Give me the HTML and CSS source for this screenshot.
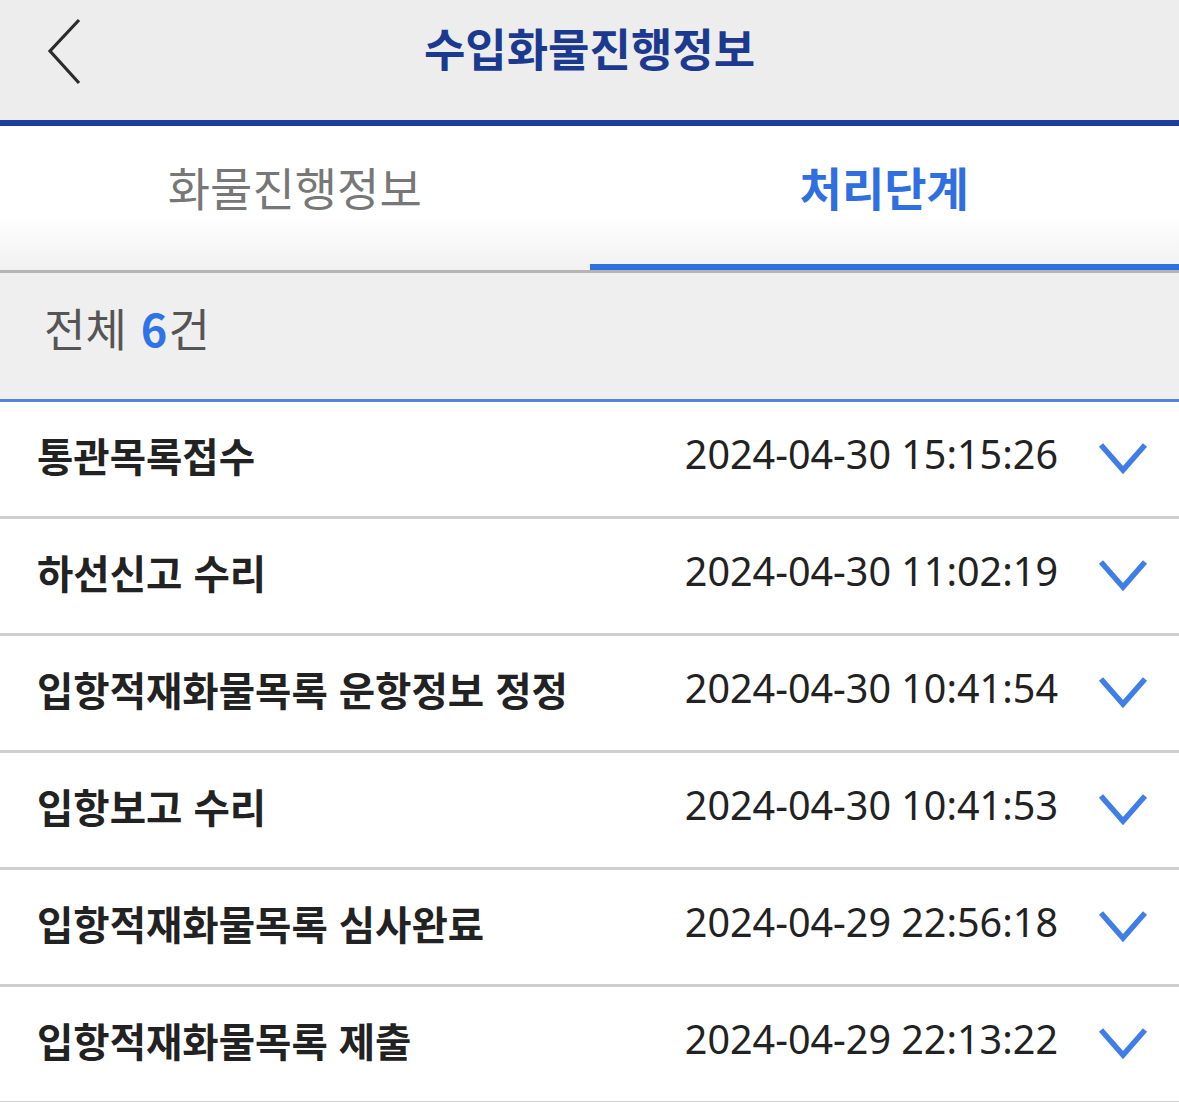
FILE: index.html
```html
<!DOCTYPE html>
<html lang="ko">
<head>
  <meta charset="UTF-8" />
  <meta name="viewport" content="width=device-width, initial-scale=1.0"/>
  <title>수입화물진행정보</title>
  <link rel="stylesheet" href="styles.css">
</head>
<body>

<header>
  <button class="btn-back" aria-label="뒤로">
    <svg width="40" height="72" viewBox="0 0 40 72"><polyline points="35,7 6,38 35,70" fill="none" stroke="#2b2b2b" stroke-width="3.2"/></svg>
  </button>
  <h1>수입화물진행정보</h1>
  <div></div>
</header>

<div class="tabs">
  <div class="tab">화물진행정보</div>
  <div class="tab active">처리단계</div>
</div>

<div class="total">전체 <strong>6</strong>건</div>

<div class="lista">
  <div class="item"><span class="nombre">통관목록접수</span><span class="fecha">2024-04-30 15:15:26</span><svg class="flecha" width="50" height="34" viewBox="0 0 50 34"><polyline points="3,4 25,29 47,4" fill="none" stroke="#3f7ee6" stroke-width="5.5"/></svg></div>
  <div class="item"><span class="nombre">하선신고 수리</span><span class="fecha">2024-04-30 11:02:19</span><svg class="flecha" width="50" height="34" viewBox="0 0 50 34"><polyline points="3,4 25,29 47,4" fill="none" stroke="#3f7ee6" stroke-width="5.5"/></svg></div>
  <div class="item"><span class="nombre">입항적재화물목록 운항정보 정정</span><span class="fecha">2024-04-30 10:41:54</span><svg class="flecha" width="50" height="34" viewBox="0 0 50 34"><polyline points="3,4 25,29 47,4" fill="none" stroke="#3f7ee6" stroke-width="5.5"/></svg></div>
  <div class="item"><span class="nombre">입항보고 수리</span><span class="fecha">2024-04-30 10:41:53</span><svg class="flecha" width="50" height="34" viewBox="0 0 50 34"><polyline points="3,4 25,29 47,4" fill="none" stroke="#3f7ee6" stroke-width="5.5"/></svg></div>
  <div class="item"><span class="nombre">입항적재화물목록 심사완료</span><span class="fecha">2024-04-29 22:56:18</span><svg class="flecha" width="50" height="34" viewBox="0 0 50 34"><polyline points="3,4 25,29 47,4" fill="none" stroke="#3f7ee6" stroke-width="5.5"/></svg></div>
  <div class="item"><span class="nombre">입항적재화물목록 제출</span><span class="fecha">2024-04-29 22:13:22</span><svg class="flecha" width="50" height="34" viewBox="0 0 50 34"><polyline points="3,4 25,29 47,4" fill="none" stroke="#3f7ee6" stroke-width="5.5"/></svg></div>
</div>

</body>
</html>
```

FILE: styles.css
```css
body {
  font-family: "Noto Sans CJK KR", "Noto Sans", sans-serif;
  margin: 0;
  background-color: white;
  color: #222;
}
header {
  background-color: #ededed;
  border-bottom: 6px solid #1c3f9f;
  display: grid;
  grid-template-columns: 1fr auto 1fr;
  align-items: center;
  padding-bottom: 26px;
  height: 94px;
}
.btn-back {
  background: none;
  border: none;
  padding: 0;
  margin-left: 44px;
  margin-top: 4px;
  width: 40px;
  height: 72px;
  cursor: pointer;
  justify-self: start;
}
header h1 {
  margin: 0;
  font-size: 45px;
  font-weight: bold;
  color: #1b3a8f;
  line-height: 1;
}
.tabs {
  display: flex;
  border-bottom: 3px solid #b4b4b4;
  background: linear-gradient(to bottom, #fff 0%, #fff 62%, #f1f1f1 100%);
}
.tab {
  flex: 1;
  height: 144px;
  box-sizing: border-box;
  display: flex;
  align-items: center;
  justify-content: center;
  padding-bottom: 18px;
  border-bottom: 6px solid transparent;
  font-size: 46px;
  color: #777;
}
.tab.active {
  border-bottom-color: #2f6fe0;
  color: #2f6fe0;
  font-weight: bold;
}
.total {
  background-color: #efefef;
  height: 129px;
  box-sizing: border-box;
  border-bottom: 3px solid #5484dc;
  display: flex;
  align-items: center;
  padding: 0 0 18px 44px;
  font-size: 45px;
  color: #555;
}
.total strong {
  color: #2f74e6;
  margin: 0 1px 0 14px;
}
.item {
  display: flex;
  align-items: center;
  height: 117px;
  box-sizing: border-box;
  border-bottom: 3px solid #cfcfcf;
  padding: 0 31px 10px 37px;
}
.nombre {
  flex: 1;
  font-size: 39.5px;
  font-weight: bold;
  color: #222;
}
.fecha {
  font-family: "Noto Sans", sans-serif;
  font-size: 39.5px;
  color: #222;
}
.flecha {
  margin-left: 40px;
  margin-top: 8px;
}
```
